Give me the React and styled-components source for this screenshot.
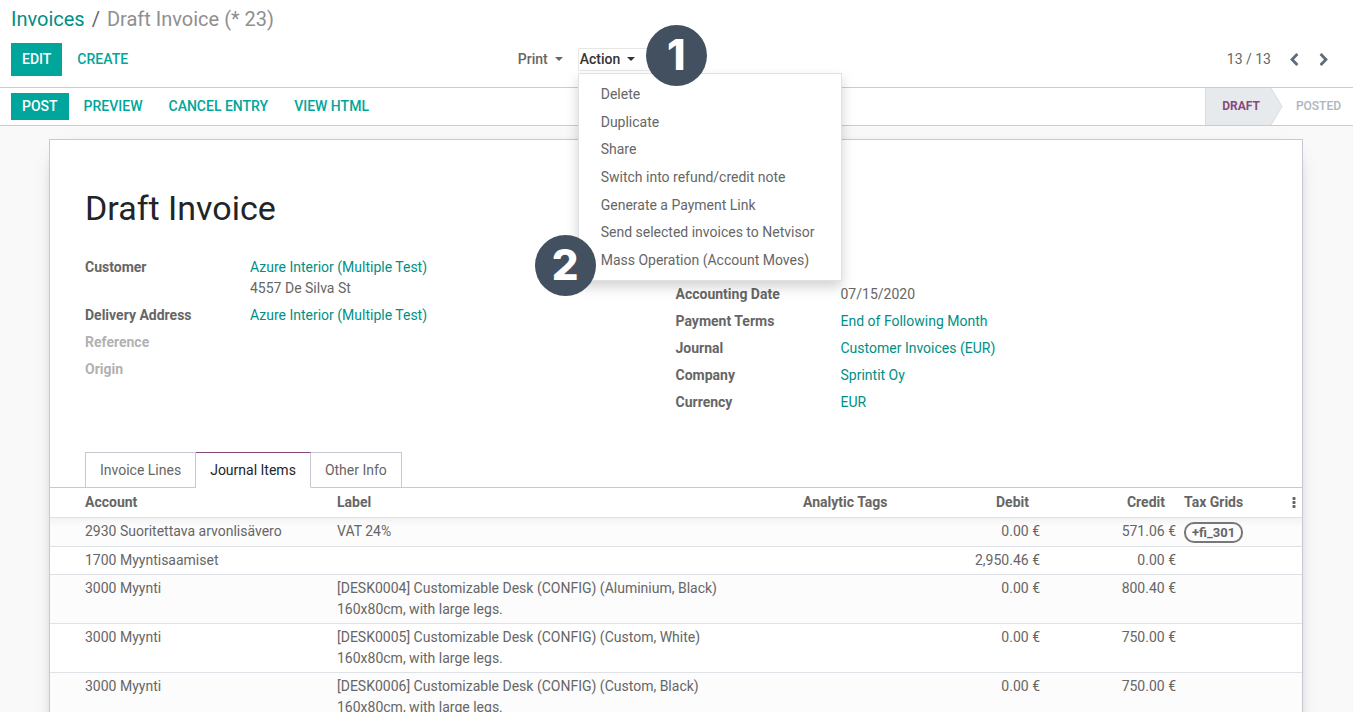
import React, { useState } from "react";
import styled, { createGlobalStyle } from "styled-components";

const invoiceFields = [
  { label: "Customer", value: "Azure Interior (Multiple Test)", link: true, note: "4557 De Silva St" },
  { label: "Delivery Address", value: "Azure Interior (Multiple Test)", link: true },
  { label: "Reference" },
  { label: "Origin" },
];

const accountingFields = [
  { label: "Accounting Date", value: "07/15/2020" },
  { label: "Payment Terms", value: "End of Following Month", link: true },
  { label: "Journal", value: "Customer Invoices (EUR)", link: true },
  { label: "Company", value: "Sprintit Oy", link: true },
  { label: "Currency", value: "EUR", link: true },
];

const actions = [
  "Delete",
  "Duplicate",
  "Share",
  "Switch into refund/credit note",
  "Generate a Payment Link",
  "Send selected invoices to Netvisor",
  "Mass Operation (Account Moves)",
];

const tabs = ["Invoice Lines", "Journal Items", "Other Info"];

const lines = [
  { account: "2930 Suoritettava arvonlisävero", label: ["VAT 24%"], debit: "0.00 €", credit: "571.06 €", tag: "+fi_301" },
  { account: "1700 Myyntisaamiset", label: [], debit: "2,950.46 €", credit: "0.00 €" },
  {
    account: "3000 Myynti",
    label: ["[DESK0004] Customizable Desk (CONFIG) (Aluminium, Black)", "160x80cm, with large legs."],
    debit: "0.00 €",
    credit: "800.40 €",
  },
  {
    account: "3000 Myynti",
    label: ["[DESK0005] Customizable Desk (CONFIG) (Custom, White)", "160x80cm, with large legs."],
    debit: "0.00 €",
    credit: "750.00 €",
  },
  {
    account: "3000 Myynti",
    label: ["[DESK0006] Customizable Desk (CONFIG) (Custom, Black)", "160x80cm, with large legs."],
    debit: "0.00 €",
    credit: "750.00 €",
  },
];

const icons = {
  left: "M1427 301l-531 531 531 531q19 19 19 45t-19 45l-166 166q-19 19-45 19t-45-19l-742-742q-19-19-19-45t19-45l742-742q19-19 45-19t45 19l166 166q19 19 19 45t-19 45z",
  right: "M1363 877l-742 742q-19 19-45 19t-45-19l-166-166q-19-19-19-45t19-45l531-531-531-531q-19-19-19-45t19-45l166-166q19-19 45-19t45 19l742 742q19 19 19 45t-19 45z",
  more: "M1088 1248v192q0 40-28 68t-68 28h-192q-40 0-68-28t-28-68v-192q0-40 28-68t68-28h192q40 0 68 28t28 68zm0-512v192q0 40-28 68t-68 28h-192q-40 0-68-28t-28-68v-192q0-40 28-68t68-28h192q40 0 68 28t28 68zm0-512v192q0 40-28 68t-68 28h-192q-40 0-68-28t-28-68v-192q0-40 28-68t68-28h192q40 0 68 28t28 68z",
};

const Icon = ({ name }) => (
  <svg width="14" height="14" viewBox="0 0 1792 1792" fill="currentColor" aria-hidden="true">
    <path d={icons[name]} />
  </svg>
);

const FieldGroup = ({ fields, offset }) => (
  <Fields $offset={offset}>
    {fields.map(({ label, value, link, note }) => (
      <Field key={label}>
        <FieldLabel $empty={!value}>{label}</FieldLabel>
        <FieldValue>
          {link ? <Link href="#">{value}</Link> : value}
          {note && <div>{note}</div>}
        </FieldValue>
      </Field>
    ))}
  </Fields>
);

const App = () => {
  const [isOpen, setIsOpen] = useState(true);
  const [tab, setTab] = useState("Journal Items");

  return (
    <Page>
      <GlobalStyle />
      <ControlPanel>
        <Breadcrumb>
          <Link href="#">Invoices</Link>
          <span>/</span>
          <Current>Draft Invoice (* 23)</Current>
        </Breadcrumb>
        <Controls>
          <Buttons>
            <Button $primary>EDIT</Button>
            <Button>CREATE</Button>
          </Buttons>
          <Menus>
            <MenuButton>
              Print <Caret />
            </MenuButton>
            <Dropdown>
              <MenuButton $open={isOpen} onClick={() => setIsOpen(!isOpen)}>
                Action <Caret />
              </MenuButton>
              {isOpen && (
                <Menu>
                  {actions.map((action) => (
                    <MenuItem key={action}>{action}</MenuItem>
                  ))}
                  <Step $top="-49px" $left="67px">1</Step>
                  <Step $top="161px" $left="-44px">2</Step>
                </Menu>
              )}
            </Dropdown>
          </Menus>
          <Pager>
            <span>13 / 13</span>
            <PagerButton aria-label="Previous">
              <Icon name="left" />
            </PagerButton>
            <PagerButton aria-label="Next">
              <Icon name="right" />
            </PagerButton>
          </Pager>
        </Controls>
      </ControlPanel>

      <StatusBar>
        <Buttons>
          <Button $primary $small>POST</Button>
          <Button $small>PREVIEW</Button>
          <Button $small>CANCEL ENTRY</Button>
          <Button $small>VIEW HTML</Button>
        </Buttons>
        <Stages>
          <Stage $active>
            DRAFT
            <Arrow viewBox="0 0 12 37" preserveAspectRatio="none">
              <path d="M0 0 L11 18.5 L0 37 Z" fill="#e6eaed" />
              <path d="M0 0 L11 18.5 L0 37" fill="none" stroke="#d8dce0" />
            </Arrow>
          </Stage>
          <Stage>POSTED</Stage>
        </Stages>
      </StatusBar>

      <Content>
        <Sheet>
          <Title>Draft Invoice</Title>
          <Groups>
            <FieldGroup fields={invoiceFields} />
            <FieldGroup fields={accountingFields} offset />
          </Groups>
          <Tabs role="tablist">
            {tabs.map((name) => (
              <Tab
                key={name}
                role="tab"
                aria-selected={tab === name}
                $active={tab === name}
                onClick={() => setTab(name)}
              >
                {name}
              </Tab>
            ))}
          </Tabs>
          <Table>
            <colgroup>
              <col width="283" />
              <col />
              <col width="109" />
              <col width="136" />
              <col width="136" />
              <col width="97" />
              <col width="25" />
            </colgroup>
            <thead>
              <tr>
                <th>Account</th>
                <th>Label</th>
                <th>Analytic Tags</th>
                <NumberHead>Debit</NumberHead>
                <NumberHead>Credit</NumberHead>
                <th>Tax Grids</th>
                <th>
                  <MoreButton aria-label="Optional columns">
                    <Icon name="more" />
                  </MoreButton>
                </th>
              </tr>
            </thead>
            <tbody>
              {lines.map((line, i) => (
                <tr key={i}>
                  <td>{line.account}</td>
                  <td>
                    {line.label.map((text) => (
                      <div key={text}>{text}</div>
                    ))}
                  </td>
                  <td />
                  <NumberCell>{line.debit}</NumberCell>
                  <NumberCell>{line.credit}</NumberCell>
                  <td>{line.tag && <Tag>{line.tag}</Tag>}</td>
                  <td />
                </tr>
              ))}
            </tbody>
          </Table>
        </Sheet>
      </Content>
    </Page>
  );
};

const GlobalStyle = createGlobalStyle`
  * {
    box-sizing: border-box;
  }
  body {
    margin: 0;
    font-family: Roboto, "Noto Sans", sans-serif;
    font-size: 14px;
    line-height: 21px;
    color: #666;
    background-color: #fff;
  }
  button {
    font: inherit;
    color: inherit;
    border: none;
    background: none;
    padding: 0;
    cursor: pointer;
  }
`;

const Page = styled.div`
  height: 100vh;
  display: flex;
  flex-direction: column;
  overflow: hidden;
`;

const Link = styled.a`
  color: #008f86;
  text-decoration: none;
`;

const ControlPanel = styled.header`
  padding: 4px 11px 11px;
  border-bottom: 1px solid #ccc;
`;

const Breadcrumb = styled.nav`
  display: flex;
  gap: 7px;
  font-size: 20px;
  line-height: 30px;
`;

const Current = styled.span`
  color: #8f8f8f;
`;

const Controls = styled.div`
  display: grid;
  grid-template-columns: 38% 1fr auto;
  align-items: start;
  padding-top: 9px;
`;

const Buttons = styled.div`
  display: flex;
  gap: 4px;
`;

const Button = styled.button`
  height: ${({ $small }) => ($small ? "27px" : "33px")};
  padding: 0 11px;
  font-weight: 500;
  color: ${({ $primary }) => ($primary ? "#fff" : "#00a59b")};
  background-color: ${({ $primary }) => ($primary ? "#00a59b" : "transparent")};
`;

const Menus = styled.div`
  display: flex;
  gap: 14px;
  padding-top: 5px;
`;

const MenuButton = styled.button`
  display: flex;
  align-items: center;
  gap: 7px;
  height: 23px;
  font-weight: 500;
  color: ${({ $open }) => ($open ? "#333" : "#666")};
  border: 1px solid ${({ $open }) => ($open ? "#e6e6e6" : "transparent")};
  padding: ${({ $open }) => ($open ? "0 14px 0 1px" : "0")};
`;

const Caret = styled.span`
  margin-bottom: 2px;
  border: 4px solid transparent;
  border-top-color: currentColor;
  border-bottom: none;
`;

const Dropdown = styled.div`
  position: relative;
`;

const Menu = styled.div`
  position: absolute;
  z-index: 1;
  top: 25px;
  left: 0;
  min-width: 264px;
  height: 208px;
  padding: 7px 0 6px;
  display: grid;
  background-color: #fff;
  border: 1px solid #dee2e6;
  box-shadow: 0 6px 12px rgba(0, 0, 0, 0.175);
`;

const MenuItem = styled.button`
  padding: 0 22px;
  text-align: left;
  white-space: nowrap;
`;

const Step = styled.span`
  position: absolute;
  top: ${({ $top }) => $top};
  left: ${({ $left }) => $left};
  width: 61px;
  height: 61px;
  border-radius: 50%;
  background-color: #435060;
  color: #fff;
  font-family: Inter, sans-serif;
  font-size: 42px;
  font-weight: 800;
  line-height: 60px;
  text-align: center;
`;

const Pager = styled.div`
  display: flex;
  align-items: center;
  gap: 16px;
  padding: 6px 11px 0 0;
`;

const PagerButton = styled.button`
  display: flex;
  color: #5f6b78;
`;

const StatusBar = styled.div`
  display: flex;
  justify-content: space-between;
  align-items: center;
  padding: 0 1px 0 11px;
  border-bottom: 1px solid #ccc;
`;

const Stages = styled.div`
  display: flex;
`;

const Stage = styled.div`
  position: relative;
  padding: 0 11px 0 ${({ $active }) => ($active ? "16px" : "25px")};
  font-size: 12px;
  font-weight: ${({ $active }) => ($active ? 700 : 500)};
  line-height: 37px;
  color: ${({ $active }) => ($active ? "#864a7c" : "#adb5bd")};
  background-color: ${({ $active }) => ($active ? "#e6eaed" : "#fff")};
  border-left: ${({ $active }) => ($active ? "1px solid #d8dce0" : "none")};
`;

const Arrow = styled.svg`
  position: absolute;
  z-index: 1;
  top: 0;
  left: 100%;
  width: 12px;
  height: 37px;
`;

const Content = styled.main`
  flex: 1;
  min-height: 0;
  overflow: hidden;
  padding: 13px 50px 0 49px;
  background-color: #f9f9f9;
`;

const Sheet = styled.section`
  background-color: #fff;
  border: 1px solid #c8c8d3;
  box-shadow: 0 5px 20px -15px #000;
  padding-bottom: 24px;
`;

const Title = styled.h1`
  margin: 0;
  padding: 47px 35px 0;
  font-size: 34px;
  font-weight: 400;
  line-height: 42px;
  color: #212529;
`;

const Groups = styled.div`
  display: grid;
  grid-template-columns: 1fr 1fr;
  padding: 28px 36px 0 35px;
`;

const Fields = styled.dl`
  margin: 0;
  padding-top: ${({ $offset }) => ($offset ? "27px" : "0")};
`;

const Field = styled.div`
  display: flex;
  padding-bottom: 6px;
`;

const FieldLabel = styled.dt`
  width: 165px;
  font-weight: 700;
  opacity: ${({ $empty }) => ($empty ? 0.5 : 1)};
`;

const FieldValue = styled.dd`
  margin: 0;
`;

const Tabs = styled.div`
  display: flex;
  padding: 33px 35px 0;
  border-bottom: 1px solid #c8c8d3;
`;

const Tab = styled.button`
  height: 36px;
  margin-bottom: -1px;
  padding: 0 14px;
  color: ${({ $active }) => ($active ? "#212529" : "#666")};
  background-color: #fff;
  border: 1px solid #c8c8d3;
  border-top-color: ${({ $active }) => ($active ? "#864a7c" : "#c8c8d3")};
  border-bottom-color: ${({ $active }) => ($active ? "#fff" : "#c8c8d3")};
  & + & {
    border-left: none;
  }
`;

const Table = styled.table`
  width: 100%;
  table-layout: fixed;
  border-collapse: separate;
  border-spacing: 0;
  th,
  td {
    padding: 3px 4px;
    text-align: left;
    vertical-align: top;
    border-bottom: 1px solid #dee2e6;
  }
  th {
    padding: 4px;
    font-weight: 700;
    white-space: nowrap;
  }
  th:first-child,
  td:first-child {
    padding-left: 35px;
  }
  tbody tr:nth-child(odd) {
    background-color: #fcfcfc;
  }
  tbody tr:first-child {
    background-image: linear-gradient(#f3f3f3, #fcfcfc 8px);
  }
`;

const NumberHead = styled.th`
  && {
    padding-right: 15px;
    text-align: right;
  }
`;

const NumberCell = styled.td`
  && {
    text-align: right;
  }
`;

const MoreButton = styled.button`
  display: flex;
  margin: 4px 0 0 6px;
`;

const Tag = styled.span`
  display: block;
  width: fit-content;
  margin-top: 1px;
  padding: 0 6px;
  font-size: 13px;
  font-weight: 700;
  line-height: 17px;
  border: 2px solid #777;
  border-radius: 10px;
`;

export default App;
